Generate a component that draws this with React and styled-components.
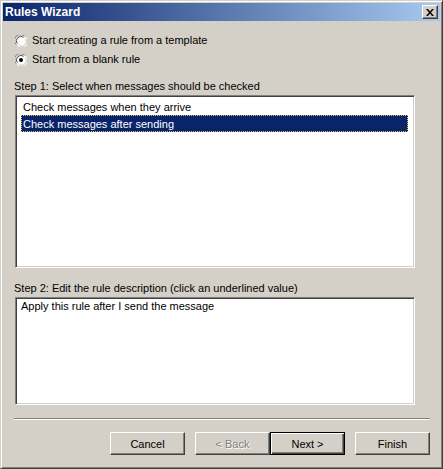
import styled, { createGlobalStyle } from "styled-components";

const Global = createGlobalStyle`
  body {
    margin: 0;
    background: #d4d0c8;
    font-family: "Liberation Sans", Arial, sans-serif;
    font-size: 11px;
    color: #000;
  }
`;

const Window = styled.div`
  width: 443px;
  height: 469px;
  box-sizing: border-box;
  background: #d4d0c8;
  border: 1px solid;
  border-color: #d4d0c8 #404040 #404040 #d4d0c8;
  box-shadow: inset 1px 1px #fff, inset -1px -1px #808080;
  padding: 2px;
  display: flex;
  flex-direction: column;
`;

const TitleBar = styled.div`
  height: 18px;
  display: flex;
  align-items: center;
  justify-content: space-between;
  padding: 0 2px 0 2px;
  background: linear-gradient(to right, #0a246a, #a6caf0);
  color: #fff;
  font-weight: bold;
  font-size: 12px;
`;

const CloseButton = styled.div`
  width: 16px;
  height: 14px;
  box-sizing: border-box;
  background: #d4d0c8;
  border: 1px solid;
  border-color: #fff #404040 #404040 #fff;
  box-shadow: inset -1px -1px #808080;
  display: flex;
  align-items: center;
  justify-content: center;
`;

const Body = styled.div`
  flex: 1;
  display: flex;
  flex-direction: column;
  padding: 13px 10px 0 11px;
`;

const RadioGroup = styled.div`
  display: flex;
  flex-direction: column;
  gap: 6px;
`;

const RadioRow = styled.label`
  display: flex;
  align-items: center;
  gap: 5px;
  height: 13px;
  line-height: 13px;
  padding-left: 1px;
`;

const Label = styled.div`
  line-height: 13px;
  margin-top: ${(p) => p.$top}px;
`;

const ListBox = styled.div`
  width: 400px;
  height: ${(p) => p.$height}px;
  box-sizing: border-box;
  margin-top: 2px;
  margin-left: 1px;
  background: #fff;
  border: 1px solid;
  border-color: #808080 #fff #fff #808080;
  box-shadow: inset 1px 1px #404040, inset -1px -1px #d4d0c8;
  padding: ${(p) => p.$pad};
  display: flex;
  flex-direction: column;
`;

const Item = styled.div`
  height: 17px;
  line-height: 16px;
  padding-left: 1px;
  box-sizing: border-box;
  border: 1px ${(p) => (p.$selected ? "dotted #e8c860" : "solid transparent")};
  background: ${(p) => (p.$selected ? "#0a246a" : "transparent")};
  color: ${(p) => (p.$selected ? "#fff" : "#000")};
`;

const Description = styled.div`
  line-height: 13px;
`;

const Separator = styled.div`
  margin-top: 13px;
  height: 0;
  border-top: 1px solid #808080;
  border-bottom: 1px solid #fff;
`;

const ButtonRow = styled.div`
  margin-top: 12px;
  display: flex;
  justify-content: flex-end;
`;

const Button = styled.button`
  width: 75px;
  height: 23px;
  box-sizing: border-box;
  margin-left: ${(p) => p.$gap}px;
  padding: 0;
  font-family: inherit;
  font-size: 11px;
  background: #d4d0c8;
  color: ${(p) => (p.disabled ? "#808080" : "#000")};
  text-shadow: ${(p) => (p.disabled ? "1px 1px #fff" : "none")};
  border: 1px solid;
  border-color: ${(p) =>
    p.$default ? "#000" : "#fff #404040 #404040 #fff"};
  box-shadow: ${(p) =>
    p.$default
      ? "inset 1px 1px #fff, inset -1px -1px #404040, inset -2px -2px #808080"
      : "inset -1px -1px #808080"};
`;

function Radio({ checked }) {
  return (
    <svg width="12" height="12" viewBox="0 0 12 12">
      <circle cx="6" cy="6" r="5.5" fill="#fff" />
      <path d="M1.2 9.5 A5.5 5.5 0 0 1 9.5 1.2" stroke="#808080" fill="none" />
      <path d="M2.3 8.6 A4.5 4.5 0 0 1 8.6 2.3" stroke="#404040" fill="none" />
      <path d="M10.8 2.5 A5.5 5.5 0 0 1 2.5 10.8" stroke="#fff" fill="none" />
      <path d="M9.8 3.4 A4.5 4.5 0 0 1 3.4 9.8" stroke="#d4d0c8" fill="none" />
      {checked && <circle cx="6" cy="6" r="2" fill="#000" />}
    </svg>
  );
}

function App() {
  return (
    <Window>
      <Global />
      <TitleBar>
        <span>Rules Wizard</span>
        <CloseButton>
          <svg width="8" height="7" viewBox="0 0 8 7">
            <path d="M0 0 L2 0 L4 2.5 L6 0 L8 0 L5 3.5 L8 7 L6 7 L4 4.5 L2 7 L0 7 L3 3.5 Z" fill="#000" />
          </svg>
        </CloseButton>
      </TitleBar>
      <Body>
        <RadioGroup>
          <RadioRow>
            <Radio />
            Start creating a rule from a template
          </RadioRow>
          <RadioRow>
            <Radio checked />
            Start from a blank rule
          </RadioRow>
        </RadioGroup>
        <Label $top={14}>Step 1: Select when messages should be checked</Label>
        <ListBox $height={173} $pad="2px 6px 0 5px">
          <Item>Check messages when they arrive</Item>
          <Item $selected>Check messages after sending</Item>
        </ListBox>
        <Label $top={14}>Step 2: Edit the rule description (click an underlined value)</Label>
        <ListBox $height={108} $pad="2px 0 0 5px">
          <Description>Apply this rule after I send the message</Description>
        </ListBox>
        <Separator />
        <ButtonRow>
          <Button $gap={0}>Cancel</Button>
          <Button $gap={10} disabled>
            &lt; Back
          </Button>
          <Button $gap={0} $default>
            Next &gt;
          </Button>
          <Button $gap={10}>Finish</Button>
        </ButtonRow>
      </Body>
    </Window>
  );
}

export default App;
